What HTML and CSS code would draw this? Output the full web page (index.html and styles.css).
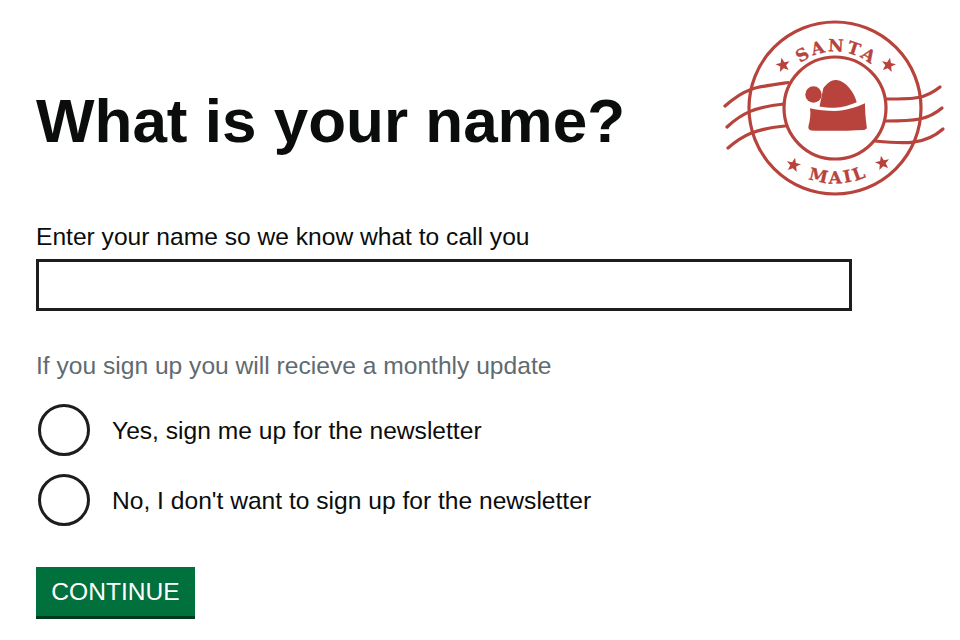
FILE: index.html
```html
<!DOCTYPE html>
<html lang="en">
<head>
<meta charset="utf-8">
<title>What is your name?</title>
<link rel="stylesheet" href="styles.css">
</head>
<body>
<svg class="stamp" viewBox="720 15 230 190" aria-hidden="true">
  <defs>
    <path id="arc-top" d="M778.500 108a56.500 56.500 0 0 1 113 0"/>
    <path id="arc-bottom" d="M759.500 108a75.500 75.500 0 0 0 151 0"/>
    <polygon id="star" points="0,-7.500 1.900,-2.500 7.200,-2.300 3,1 4.500,6.100 0,3.200 -4.500,6.100 -3,1 -7.200,-2.300 -1.900,-2.500"/>
  </defs>
  <g class="stamp-line">
    <circle cx="835" cy="108" r="86"/>
    <circle cx="835" cy="108" r="51"/>
    <path d="M725 106C745 88 755 87 788 82.500"/>
    <path d="M727 127C742 113 755 107 784 104"/>
    <path d="M728 148C743 135 755 129 785 126"/>
    <path d="M886 99C915 99 925 99 940 87"/>
    <path d="M886 121C915 121 928 120 942 108"/>
    <path d="M875 141C905 144 925 145 943 129"/>
  </g>
  <g class="stamp-fill">
    <use href="#star" transform="translate(783 65) rotate(-12)"/>
    <use href="#star" transform="translate(888.500 65) rotate(12)"/>
    <use href="#star" transform="translate(793.500 165) rotate(12)"/>
    <use href="#star" transform="translate(882.500 163) rotate(-12)"/>
    <circle cx="813.500" cy="94.500" r="8.200"/>
    <path d="M819.500 106.500 823.300 88.300C827 83 832 79.500 836.500 80 846 81 854 92 856.700 102.200 848 105.800 842 107.300 835 107.800 829 107.800 824 107.500 819.500 106.500Z"/>
    <path d="M810 108.300C818 110 826 111 835 111 845 110.500 856 107.500 865 103.300 865 110 865.500 118 866.700 126.500 867.300 128.500 866 129.700 864 130 846 131 826 131 811 130.500 808.500 130 808 128 808.500 126 810 120 811 114 810 108.300Z"/>
  </g>
  <text class="stamp-text"><textPath href="#arc-top" startOffset="51%">SANTA</textPath></text>
  <text class="stamp-text"><textPath href="#arc-bottom" startOffset="51.500%">MAIL</textPath></text>
</svg>
<main class="page">
  <h1 class="title">What is your name?</h1>
  <form class="form">
    <label class="label" for="name">Enter your name so we know what to call you</label>
    <input class="input" id="name" type="text">
    <p class="hint">If you sign up you will recieve a monthly update</p>
    <div class="radios">
      <label class="radio"><span class="radio-mark"></span><span class="radio-text">Yes, sign me up for the newsletter</span></label>
      <label class="radio"><span class="radio-mark"></span><span class="radio-text">No, I don't want to sign up for the newsletter</span></label>
    </div>
    <button class="button" type="button">CONTINUE</button>
  </form>
</main>
</body>
</html>
```
FILE: styles.css
```css
* { box-sizing: border-box; }
html, body { margin: 0; height: 100%; background: #fff; overflow: hidden; }
body { font-family: "Liberation Sans", Arial, sans-serif; color: #0b0c0c; position: relative; }
.page { padding: 86px 36px 0; }
.title { margin: 0; font-size: 62px; line-height: 70px; font-weight: 700; }
.form { display: flex; flex-direction: column; align-items: flex-start; margin-top: 66px; }
.label { font-size: 24.600px; line-height: 30px; }
.input { display: block; width: 816px; height: 52px; margin-top: 7px; border: 3px solid #1c1d1d; background: #fff; padding: 0; }
.hint { margin: 40px 0 0; font-size: 24.600px; line-height: 30px; color: #5f6b70; }
.radios { display: flex; flex-direction: column; gap: 20px; margin-top: 24px; }
.radio { display: flex; align-items: center; gap: 22px; height: 50px; font-size: 24.600px; padding-left: 2px; }
.radio-mark { width: 52px; height: 52px; border: 3px solid #1c1d1d; border-radius: 50%; flex: none; }
.radio-text { padding-top: 2px; }
.button { margin-top: 42px; width: 159px; height: 52px; border: 0; border-bottom: 3px solid #003a1a; background: #00703c; color: #fff; font: 24.600px/1 "Liberation Sans", Arial, sans-serif; padding: 2px 0 0; }
.stamp { position: absolute; left: 720px; top: 15px; width: 230px; height: 190px; }
.stamp-line { fill: none; stroke: #b8433c; stroke-width: 3.200; stroke-linecap: round; }
.stamp-fill { fill: #b8433c; }
.stamp-text { fill: #b8433c; stroke: #b8433c; stroke-width: 0.300; font-family: "DejaVu Serif", serif; font-weight: 700; font-size: 17px; letter-spacing: 2.500px; text-anchor: middle; }
```
